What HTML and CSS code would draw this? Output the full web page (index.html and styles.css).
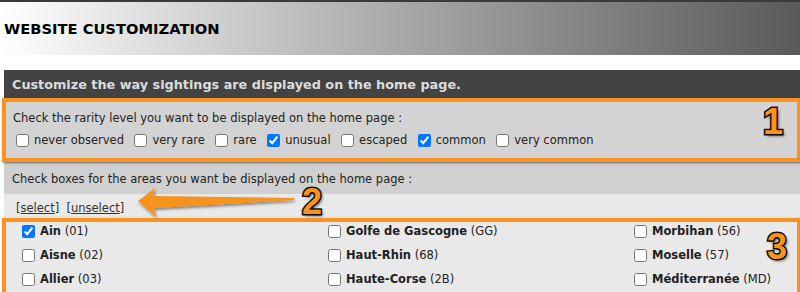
FILE: index.html
```html
<!DOCTYPE html>
<html>
<head>
  <meta charset="UTF-8">
  <title>Website customization</title>
  <link rel="stylesheet" href="styles.css">
</head>
<body>
  <div class="header">
    <h1>WEBSITE CUSTOMIZATION</h1>
  </div>

  <div class="content">
    <div class="bar">Customize the way sightings are displayed on the home page.</div>

    <div class="rarity mark">
      <p>Check the rarity level you want to be displayed on the home page :</p>
      <div class="levels">
        <label><input type="checkbox">never observed</label>
        <label><input type="checkbox">very rare</label>
        <label><input type="checkbox">rare</label>
        <label><input type="checkbox" checked>unusual</label>
        <label><input type="checkbox">escaped</label>
        <label><input type="checkbox" checked>common</label>
        <label><input type="checkbox">very common</label>
      </div>
      <span class="num num1">1</span>
    </div>

    <div class="areas-head">Check boxes for the areas you want be displayed on the home page :</div>
    <div class="areas">
      <div class="links">[<a href="#">select</a>]&nbsp;&nbsp;[<a href="#">unselect</a>]</div>
      <svg class="arrow" width="170" height="40" viewBox="0 0 170 40">
        <defs>
          <filter id="sh" x="-10%" y="-30%" width="130%" height="170%">
            <feDropShadow dx="1" dy="2" stdDeviation="1.5" flood-color="#000" flood-opacity="0.45"/>
          </filter>
        </defs>
        <path d="M2 17 L19 4 L17 12 L158 14 L158 16 L18 24 L20 33 Z" fill="#f7931e" filter="url(#sh)"/>
      </svg>
      <span class="num num2">2</span>

      <div class="grid mark">
        <label><input type="checkbox" checked><b>Ain</b>&nbsp;(01)</label>
        <label><input type="checkbox"><b>Golfe de Gascogne</b>&nbsp;(GG)</label>
        <label><input type="checkbox"><b>Morbihan</b>&nbsp;(56)</label>
        <label><input type="checkbox"><b>Aisne</b>&nbsp;(02)</label>
        <label><input type="checkbox"><b>Haut-Rhin</b>&nbsp;(68)</label>
        <label><input type="checkbox"><b>Moselle</b>&nbsp;(57)</label>
        <label><input type="checkbox"><b>Allier</b>&nbsp;(03)</label>
        <label><input type="checkbox"><b>Haute-Corse</b>&nbsp;(2B)</label>
        <label><input type="checkbox"><b>Méditerranée</b>&nbsp;(MD)</label>
        <span class="num num3">3</span>
      </div>
    </div>
  </div>
</body>
</html>
```

FILE: styles.css
```css
body {
  margin: 0;
  font-family: "DejaVu Sans", Verdana, sans-serif;
  font-size: 11.5px;
  color: #222;
  background-color: #fff;
  overflow: hidden;
}

.header {
  height: 53px;
  border-top: 2px solid #3a3a3a;
  background: linear-gradient(to right, #fff 0%, #b0b0b0 45%, #5a5a5a 100%);
  display: flex;
  align-items: center;
  padding-left: 4px;
}

.header h1 {
  margin: 0;
  font-size: 14.7px;
  font-weight: bold;
  color: #000;
}

.content {
  margin-top: 15px;
  margin-left: 4px;
}

.bar {
  height: 28px;
  line-height: 29px;
  padding-left: 8px;
  background-color: #434343;
  color: #dcdcdc;
  font-size: 12.8px;
  font-weight: bold;
}

.mark {
  border: 4px solid #f7931e;
  box-shadow: 1px 1px 2px rgba(0, 0, 0, 0.5);
  position: relative;
}

.rarity {
  margin-left: -2px;
  margin-right: -1px;
  height: 56px;
  background-color: #d3d3d3;
  padding-left: 7px;
  box-sizing: content-box;
}

.rarity p {
  margin: 0;
  padding-top: 9px;
  line-height: 15px;
}

.levels {
  display: flex;
  margin-top: 7px;
}

.levels label {
  display: flex;
  align-items: center;
  margin-right: 7.5px;
  white-space: pre;
}

input[type="checkbox"] {
  width: 13px;
  height: 13px;
  margin: 0 5px 0 3px;
}

.areas-head {
  height: 32px;
  line-height: 35px;
  padding-left: 8px;
  background-color: #d0d0d0;
}

.areas {
  background-color: #e9e9e9;
  position: relative;
  height: 200px;
}

.links {
  height: 24px;
  line-height: 29px;
  padding-left: 12px;
  color: #333;
}

.links a {
  color: #333;
}

.grid {
  margin-left: -2px;
  margin-right: -1px;
  display: grid;
  grid-template-columns: 306px 306px 1fr;
  overflow: hidden;
}

.grid label {
  display: flex;
  align-items: flex-start;
  height: 24px;
  padding-top: 2px;
  box-sizing: border-box;
  padding-left: 13px;
  white-space: pre;
  line-height: 14px;
}

.grid input[type="checkbox"] {
  margin-top: 1px;
}

.num {
  position: absolute;
  font-family: "Liberation Sans", Arial, sans-serif;
  font-weight: bold;
  font-size: 36px;
  color: #f7931e;
  -webkit-text-stroke: 3px #111;
  paint-order: stroke fill;
  text-shadow: 2px 2px 3px rgba(0, 0, 0, 0.6);
  line-height: 1;
}

.num1 {
  right: 14px;
  top: 2px;
}

.num2 {
  left: 298px;
  top: -10px;
}

.num3 {
  right: 10px;
  top: 7px;
}

.arrow {
  position: absolute;
  left: 132px;
  top: -10px;
}
```
